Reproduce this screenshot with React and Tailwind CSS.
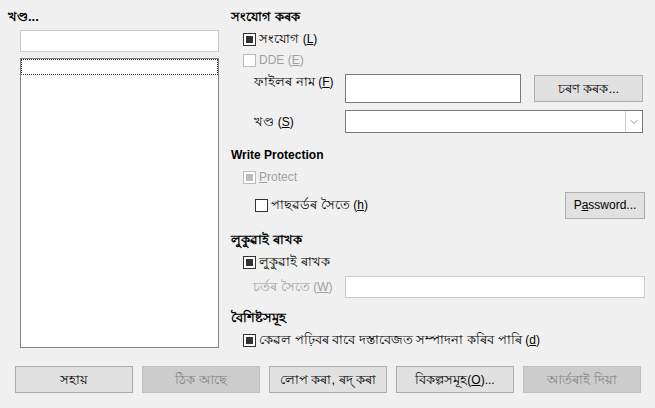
import { ChevronDown } from "lucide-react";

// Latin runs sit at 12px, the Bengali text around them at 13px
function L({ children }) {
  return <span className="text-[12px]">{children}</span>;
}

function Check({ checked, disabled }) {
  return (
    <span
      className={`flex h-[13px] w-[13px] shrink-0 items-center justify-center border bg-white ${
        disabled ? "border-[#bcbcbc]" : "border-[#333333]"
      }`}
    >
      {checked && (
        <span className={`h-[7px] w-[7px] ${disabled ? "bg-[#bcbcbc]" : "bg-[#333333]"}`} />
      )}
    </span>
  );
}

function CheckRow({ checked, disabled, children, className = "" }) {
  return (
    <div className={`flex h-[20px] items-center gap-[3px] ${className}`}>
      <Check checked={checked} disabled={disabled} />
      <span className={disabled ? "text-[#a0a0a0]" : "text-[#000]"}>{children}</span>
    </div>
  );
}

function Button({ children, disabled, className = "" }) {
  return (
    <button
      className={`flex h-[27px] items-center justify-center border ${
        disabled
          ? "border-[#bfbfbf] bg-[#cccccc] text-[#838383]"
          : "border-[#adadad] bg-[#e1e1e1] text-[#000]"
      } ${className}`}
    >
      {children}
    </button>
  );
}

export default function App() {
  return (
    <div
      className="flex h-[408px] w-[655px] flex-col bg-[#f0f0f0] text-[13px] leading-[16px] text-black"
      style={{ fontFamily: '"Liberation Sans", "Noto Sans", sans-serif' }}
    >
      <div className="flex h-[361px]">
        {/* Left column */}
        <div className="flex w-[232px] flex-col pl-[8px]">
          <div className="mt-[5px] flex h-[24px] items-center font-bold">খণ্ড...</div>
          <div className="mt-[1px] ml-[12px] h-[22px] w-[199px] border border-[#cccccc] bg-white" />
          <div className="mt-[6px] ml-[12px] h-[290px] w-[199px] border border-[#82858c] bg-white">
            <div className="h-[16px] w-full border border-dotted border-[#333]" />
          </div>
        </div>

        {/* Right column */}
        <div className="flex flex-1 flex-col pr-[10px]">
          <div className="mt-[5px] flex h-[24px] items-center font-bold">সংযোগ কৰক</div>
          <CheckRow checked className="ml-[12px]">
            সংযোগ <L>(<u>L</u>)</L>
          </CheckRow>
          <CheckRow disabled className="mt-[1px] ml-[12px]">
            <L>DDE (<u>E</u>)</L>
          </CheckRow>

          <div className="mt-[4px] flex h-[29px] items-start">
            <span className="ml-[23px] w-[91px]">
              ফাইলৰ নাম <L>(<u>F</u>)</L>
            </span>
            <div className="h-[29px] w-[176px] border border-[#7a7a7a] bg-white" />
            <Button className="mt-[1px] ml-[13px] w-[109px]">চৰণ কৰক...</Button>
          </div>

          <div className="mt-[7px] flex h-[23px] items-center">
            <span className="ml-[23px] w-[91px]">
              খণ্ড <L>(<u>S</u>)</L>
            </span>
            <div className="flex h-[23px] w-[298px] border border-[#7a7a7a] bg-white">
              <div className="flex-1" />
              <div className="flex w-[17px] items-center justify-center border-l border-[#cfcfcf]">
                <ChevronDown size={12} strokeWidth={1.25} color="#555" />
              </div>
            </div>
          </div>

          <div className="mt-[10px] flex h-[24px] items-center font-bold">
            <L>Write Protection</L>
          </div>
          <CheckRow checked disabled className="ml-[12px]">
            <L>
              <u>P</u>rotect
            </L>
          </CheckRow>

          <div className="mt-[4px] flex h-[28px] items-center">
            <CheckRow className="ml-[24px]">
              পাছৱৰ্ডৰ সৈতে <L>(<u>h</u>)</L>
            </CheckRow>
            <div className="flex-1" />
            <Button className="w-[80px]">
              <L>
                P<u>a</u>ssword...
              </L>
            </Button>
          </div>

          <div className="mt-[9px] flex h-[24px] items-center font-bold">লুকুৱাই ৰাখক</div>
          <CheckRow checked className="ml-[12px]">
            লুকুৱাই ৰাখক
          </CheckRow>

          <div className="mt-[4px] flex h-[22px] items-center">
            <span className="ml-[22px] w-[92px] text-[#a0a0a0]">
              চৰ্তৰ সৈতে <L>(<u>W</u>)</L>
            </span>
            <div className="h-[22px] w-[300px] border border-[#cccccc] bg-white" />
          </div>

          <div className="mt-[8px] flex h-[24px] items-center font-bold">বৈশিষ্টসমূহ</div>
          <CheckRow checked className="ml-[12px]">
            কেৱল পঢ়িবৰ বাবে দস্তাবেজত সম্পাদনা কৰিব পাৰি <L>(<u>d</u>)</L>
          </CheckRow>
        </div>
      </div>

      {/* Button row */}
      <div className="mt-[5px] flex gap-[9px] pl-[15px]">
        <Button className="w-[118px]">সহায়</Button>
        <Button disabled className="w-[118px]">ঠিক আছে</Button>
        <Button className="w-[118px]">লোপ কৰা, ৰদ্ কৰা</Button>
        <Button className="w-[118px]">
          বিকল্পসমূহ <L>(<u>O</u>)...</L>
        </Button>
        <Button disabled className="w-[118px]">আৰ্তৰাই দিয়া</Button>
      </div>
    </div>
  );
}
